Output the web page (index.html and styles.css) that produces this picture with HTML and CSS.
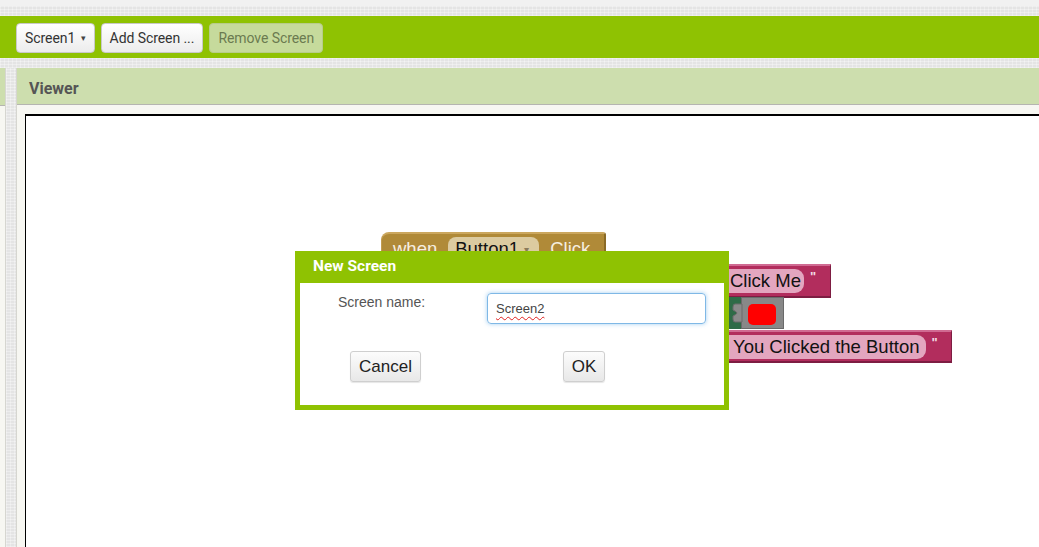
FILE: index.html
```html
<!DOCTYPE html>
<html>
<head>
<meta charset="utf-8">
<link rel="stylesheet" href="styles.css">
</head>
<body>
<div class="page">
  <div class="topstrip"></div>
  <div class="texture band-top"></div>
  <div class="toolbar">
    <button class="tbtn">Screen1 <span class="caret">▾</span></button>
    <button class="tbtn">Add Screen ...</button>
    <button class="tbtn disabled">Remove Screen</button>
  </div>
  <div class="texture band-mid"></div>
  <div class="main">
    <div class="leftpanel">
      <div class="phead"></div>
    </div>
    <div class="texture gutter"></div>
    <div class="viewer">
      <div class="phead vhead">Viewer</div>
      <div class="vbody">
        <div class="canvas">
          <div class="block when">
            <span class="kw">when</span>
            <span class="pill tan">Button1 <span class="darr">▾</span></span>
            <span class="kw">Click</span>
          </div>
          <div class="block text b1">
            <span class="pill pink p1">Click Me</span>
            <span class="quote">"</span>
          </div>
          <div class="colorpiece">
            <svg width="55" height="32" viewBox="0 0 55 32">
              <rect x="0" y="0" width="14" height="32" fill="#2e6b47"/>
              <rect x="12.5" y="0.5" width="42" height="31" fill="#888" stroke="#6a6a6a"/>
              <path d="M13 7 H6 Q4 7 4 10 V13 Q8 15 8 16 Q8 17 4 19 V22 Q4 25 6 25 H13 Z" fill="#8a8a8a" stroke="#6a6a6a"/>
              <rect x="19" y="7" width="28" height="21" rx="5" fill="#ff0000"/>
            </svg>
          </div>
          <div class="block text b3">
            <span class="pill pink p3">You Clicked the Button</span>
            <span class="quote">"</span>
          </div>
        </div>
      </div>
    </div>
  </div>
  <div class="dialog">
    <div class="dtitle">New Screen</div>
    <div class="dbody">
      <div class="drow">
        <span class="dlabel">Screen name:</span>
        <div class="dinput"><span class="spell">Screen2</span></div>
      </div>
      <div class="drow buttons">
        <button class="dbtn cancel">Cancel</button>
        <button class="dbtn ok">OK</button>
      </div>
    </div>
  </div>
</div>
</body>
</html>
```

FILE: styles.css
```css
html, body {
  margin: 0;
  padding: 0;
  width: 1039px;
  height: 547px;
  overflow: hidden;
  background: #f1f1f1;
  font-family: Roboto, "Liberation Sans", sans-serif;
}

.page {
  position: relative;
  width: 1039px;
  height: 547px;
  overflow: hidden;
  display: flex;
  flex-direction: column;
}

.topstrip {
  height: 6px;
  background: #f1f1f1;
}

.texture {
  background-color: #e4e4e4;
  background-image:
    repeating-linear-gradient(0deg, rgba(255,255,255,0.35) 0 1px, transparent 1px 3px),
    repeating-linear-gradient(90deg, rgba(255,255,255,0.3) 0 1px, transparent 1px 4px);
}

.band-top { height: 10px; }
.band-mid { height: 10px; }

.toolbar {
  height: 42px;
  box-sizing: border-box;
  background: #8fc202;
  padding: 7px 16px;
  display: flex;
  gap: 6px;
  align-items: flex-start;
}

.tbtn {
  height: 30px;
  box-sizing: border-box;
  padding: 0 8px;
  font-family: Roboto, "Liberation Sans", sans-serif;
  font-size: 14px;
  color: #333;
  background: linear-gradient(#ffffff, #ececec);
  border: 1px solid #c9c9c9;
  border-radius: 4px;
  line-height: 28px;
  letter-spacing: -0.07px;
}

.tbtn .caret {
  font-size: 9px;
  color: #444;
  margin-left: 2px;
  vertical-align: 2px;
}

.tbtn.disabled {
  background: #c6da9c;
  border-color: #b7cc8a;
  color: #6b7a50;
}

.main {
  flex: 1;
  display: flex;
  min-height: 0;
}

.leftpanel {
  width: 5px;
  background: #f7f7f2;
  border-right: 1px solid #d6d6d0;
}

.gutter {
  width: 10px;
}

.viewer {
  flex: 1;
  display: flex;
  flex-direction: column;
  background: #f7f7f2;
  border-left: 1px solid #d6d6d0;
  min-width: 0;
}

.phead {
  height: 37px;
  background: #cddeae;
  border-bottom: 1px solid #b5b5b0;
}

.vhead {
  box-sizing: border-box;
  padding: 2px 0 0 12px;
  font-weight: bold;
  font-size: 16px;
  color: #555;
  line-height: 38px;
}

.vbody {
  flex: 1;
  padding: 9px 0 0 8px;
  overflow: hidden;
}

.canvas {
  position: relative;
  width: 1100px;
  height: 600px;
  background: #fff;
  border-left: 1px solid #000;
  border-top: 2px solid #000;
}

/* Blocks (free canvas) */
.block {
  position: absolute;
  display: flex;
  align-items: center;
  box-sizing: border-box;
  font-family: "Liberation Sans", Arial, sans-serif;
  font-size: 18.5px;
}

.when {
  left: 355px;
  top: 116px;
  width: 225px;
  height: 44px;
  background: #b08a38;
  border-top: 2px solid #cba75e;
  border-right: 2px solid #8a6a26;
  border-left: 1px solid #c29c50;
  border-radius: 8px 3px 0 0;
  padding: 3px 0 0 11px;
  align-items: flex-start;
}

.when .kw {
  color: #f6efe0;
  line-height: 23px;
}

.pill {
  display: inline-block;
  color: #111;
  line-height: 23px;
}

.tan {
  background: #dccba0;
  border-radius: 8px;
  padding: 0 10px 0 7px;
  margin: 0 11px 0 11px;
}

.darr {
  font-size: 10px;
  color: #8a7a5a;
  vertical-align: 2px;
}

.text {
  background: #b22d5d;
  border-top: 2px solid #d06a92;
  border-bottom: 2px solid #7d1d42;
  border-right: 1px solid #7d1d42;
}

.b1 {
  left: 686px;
  top: 148px;
  width: 119px;
  height: 34px;
  padding-left: 4px;
}

.b3 {
  left: 686px;
  top: 214px;
  width: 240px;
  height: 33px;
  padding-left: 4px;
}

.pink {
  background: #e3a6bf;
  border-radius: 9px;
  height: 24px;
  line-height: 24px;
}

.p1 { padding: 0 3px 0 14px; }
.p3 { padding: 0 6px 0 17px; }

.quote {
  color: #f3dbe5;
  font-size: 13px;
  font-weight: bold;
  margin-left: 6px;
  align-self: flex-start;
  margin-top: 3px;
}

.colorpiece {
  position: absolute;
  left: 703px;
  top: 181px;
  width: 55px;
  height: 32px;
}

.colorpiece svg { display: block; }

/* Dialog overlay */
.dialog {
  position: absolute;
  left: 295px;
  top: 251px;
  width: 434px;
  box-sizing: border-box;
  border: 5px solid #8fc202;
  border-top: 0;
  background: #fff;
}

.dtitle {
  background: #8fc202;
  height: 32px;
  box-sizing: border-box;
  padding: 6px 0 0 13px;
  color: #fff;
  font-weight: bold;
  font-size: 15.5px;
  font-family: Roboto, "Liberation Sans", sans-serif;
}

.dbody {
  padding: 10px 0 23px 0;
  font-family: "Liberation Sans", Arial, sans-serif;
}

.drow {
  display: flex;
  align-items: flex-start;
}

.dlabel {
  width: 149px;
  margin-left: 38px;
  padding-top: 1px;
  font-size: 14px;
  color: #555;
}

.dinput {
  width: 219px;
  height: 31px;
  box-sizing: border-box;
  border: 1px solid #7fb8e6;
  border-radius: 4px;
  box-shadow: 0 0 4px rgba(102, 175, 233, 0.6);
  padding: 0 8px;
  font-size: 13px;
  line-height: 29px;
  color: #444;
}

.spell {
  text-decoration: underline wavy #e02020;
  text-decoration-thickness: 1px;
  text-underline-offset: 3px;
}

.buttons {
  margin-top: 27px;
}

.dbtn {
  height: 31px;
  box-sizing: border-box;
  font-family: "Liberation Sans", Arial, sans-serif;
  font-size: 17px;
  color: #222;
  background: linear-gradient(#fcfcfc, #e8e8e8);
  border: 1px solid #cfcfcf;
  border-radius: 3px;
  box-shadow: 0 1px 1px rgba(0,0,0,0.1);
  padding: 0;
}

.cancel {
  width: 71px;
  margin-left: 50px;
}

.ok {
  width: 42px;
  margin-left: 142px;
}
```
